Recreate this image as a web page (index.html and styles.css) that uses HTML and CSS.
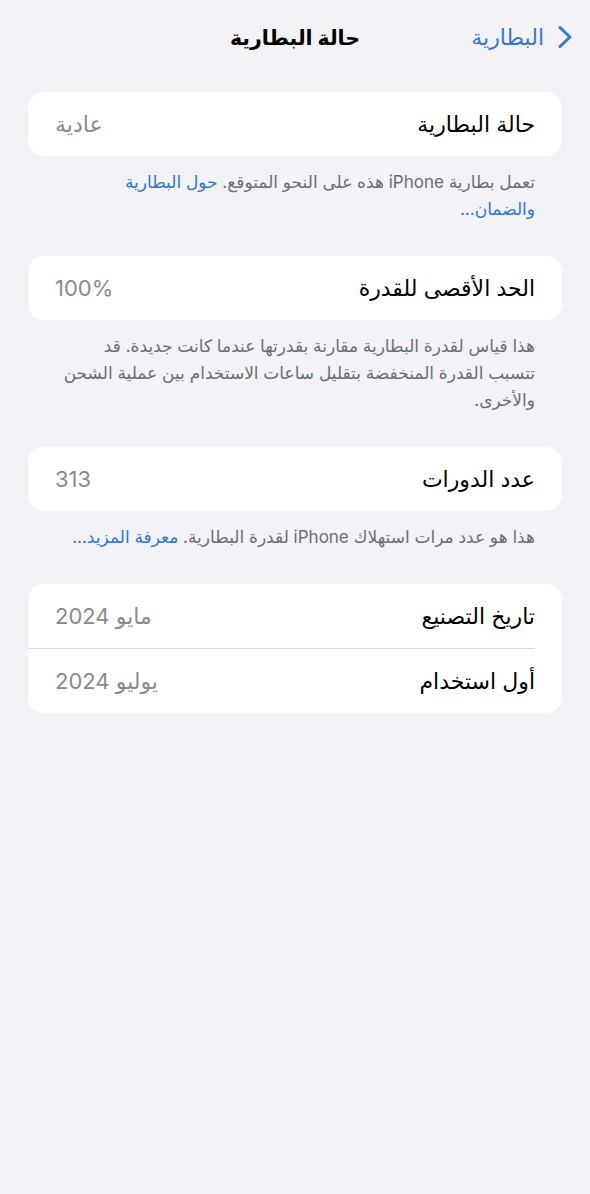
FILE: index.html
```html
<!DOCTYPE html>
<html dir="rtl" lang="ar">
<head>
<meta charset="utf-8">
<title>حالة البطارية</title>
<link rel="stylesheet" href="styles.css">
</head>
<body>
<header class="nav">
  <a class="back" href="#">
    <svg class="chevron" viewBox="0 0 16 24" width="16" height="24" aria-hidden="true"><path d="M3 2.5 L13 12 L3 21.5" fill="none" stroke="currentColor" stroke-width="3" stroke-linecap="round" stroke-linejoin="round"/></svg>
    <span>البطارية</span>
  </a>
  <h1 class="title">حالة البطارية</h1>
  <span class="spacer"></span>
</header>
<main class="content">
  <section class="group">
    <div class="card">
      <div class="row"><span class="label">حالة البطارية</span><span class="value">عادية</span></div>
    </div>
    <p class="footer">تعمل بطارية iPhone هذه على النحو المتوقع. <a class="link" href="#">حول البطارية والضمان...</a></p>
  </section>
  <section class="group">
    <div class="card">
      <div class="row"><span class="label">الحد الأقصى للقدرة</span><span class="value num">100%</span></div>
    </div>
    <p class="footer">هذا قياس لقدرة البطارية مقارنة بقدرتها عندما كانت جديدة. قد تتسبب القدرة المنخفضة بتقليل ساعات الاستخدام بين عملية الشحن والأخرى.</p>
  </section>
  <section class="group">
    <div class="card">
      <div class="row"><span class="label">عدد الدورات</span><span class="value num">313</span></div>
    </div>
    <p class="footer">هذا هو عدد مرات استهلاك iPhone لقدرة البطارية. <a class="link" href="#">معرفة المزيد...</a></p>
  </section>
  <section class="group">
    <div class="card">
      <div class="row"><span class="label">تاريخ التصنيع</span><span class="value">مايو 2024</span></div>
      <div class="row"><span class="label">أول استخدام</span><span class="value">يوليو 2024</span></div>
    </div>
  </section>
</main>
</body>
</html>
```

FILE: styles.css
```css
html, body {
  margin: 0;
  padding: 0;
}
body {
  background: #f2f2f7;
  font-family: Inter, "DejaVu Sans", sans-serif;
  color: #000;
  min-height: 1194px;
}
.nav {
  height: 74px;
  display: grid;
  grid-template-columns: 1fr auto 1fr;
  align-items: center;
}
.back {
  display: flex;
  align-items: center;
  gap: 13px;
  padding-right: 17px;
  color: #3478d4;
  text-decoration: none;
  font-size: 22px;
}
.chevron {
  display: block;
}
.title {
  margin: 0;
  font-size: 20.5px;
  font-weight: 700;
}
.content {
  padding-top: 18px;
}
.card {
  margin: 0 28px;
  background: #fff;
  border-radius: 16px;
  overflow: hidden;
}
.row {
  height: 64px;
  padding: 0 27px;
  display: flex;
  align-items: center;
  justify-content: space-between;
  font-size: 22px;
}
.row + .row {
  border-top: 1px solid #dcdce0;
  margin-right: 27px;
  padding-right: 0;
}
.value {
  color: #8a8a8e;
}
.footer {
  margin: 0;
  padding: 13px 55px 33px;
  font-size: 17px;
  line-height: 27px;
  color: #6d6d72;
}
.link {
  color: #2f76d2;
  text-decoration: none;
}
```
